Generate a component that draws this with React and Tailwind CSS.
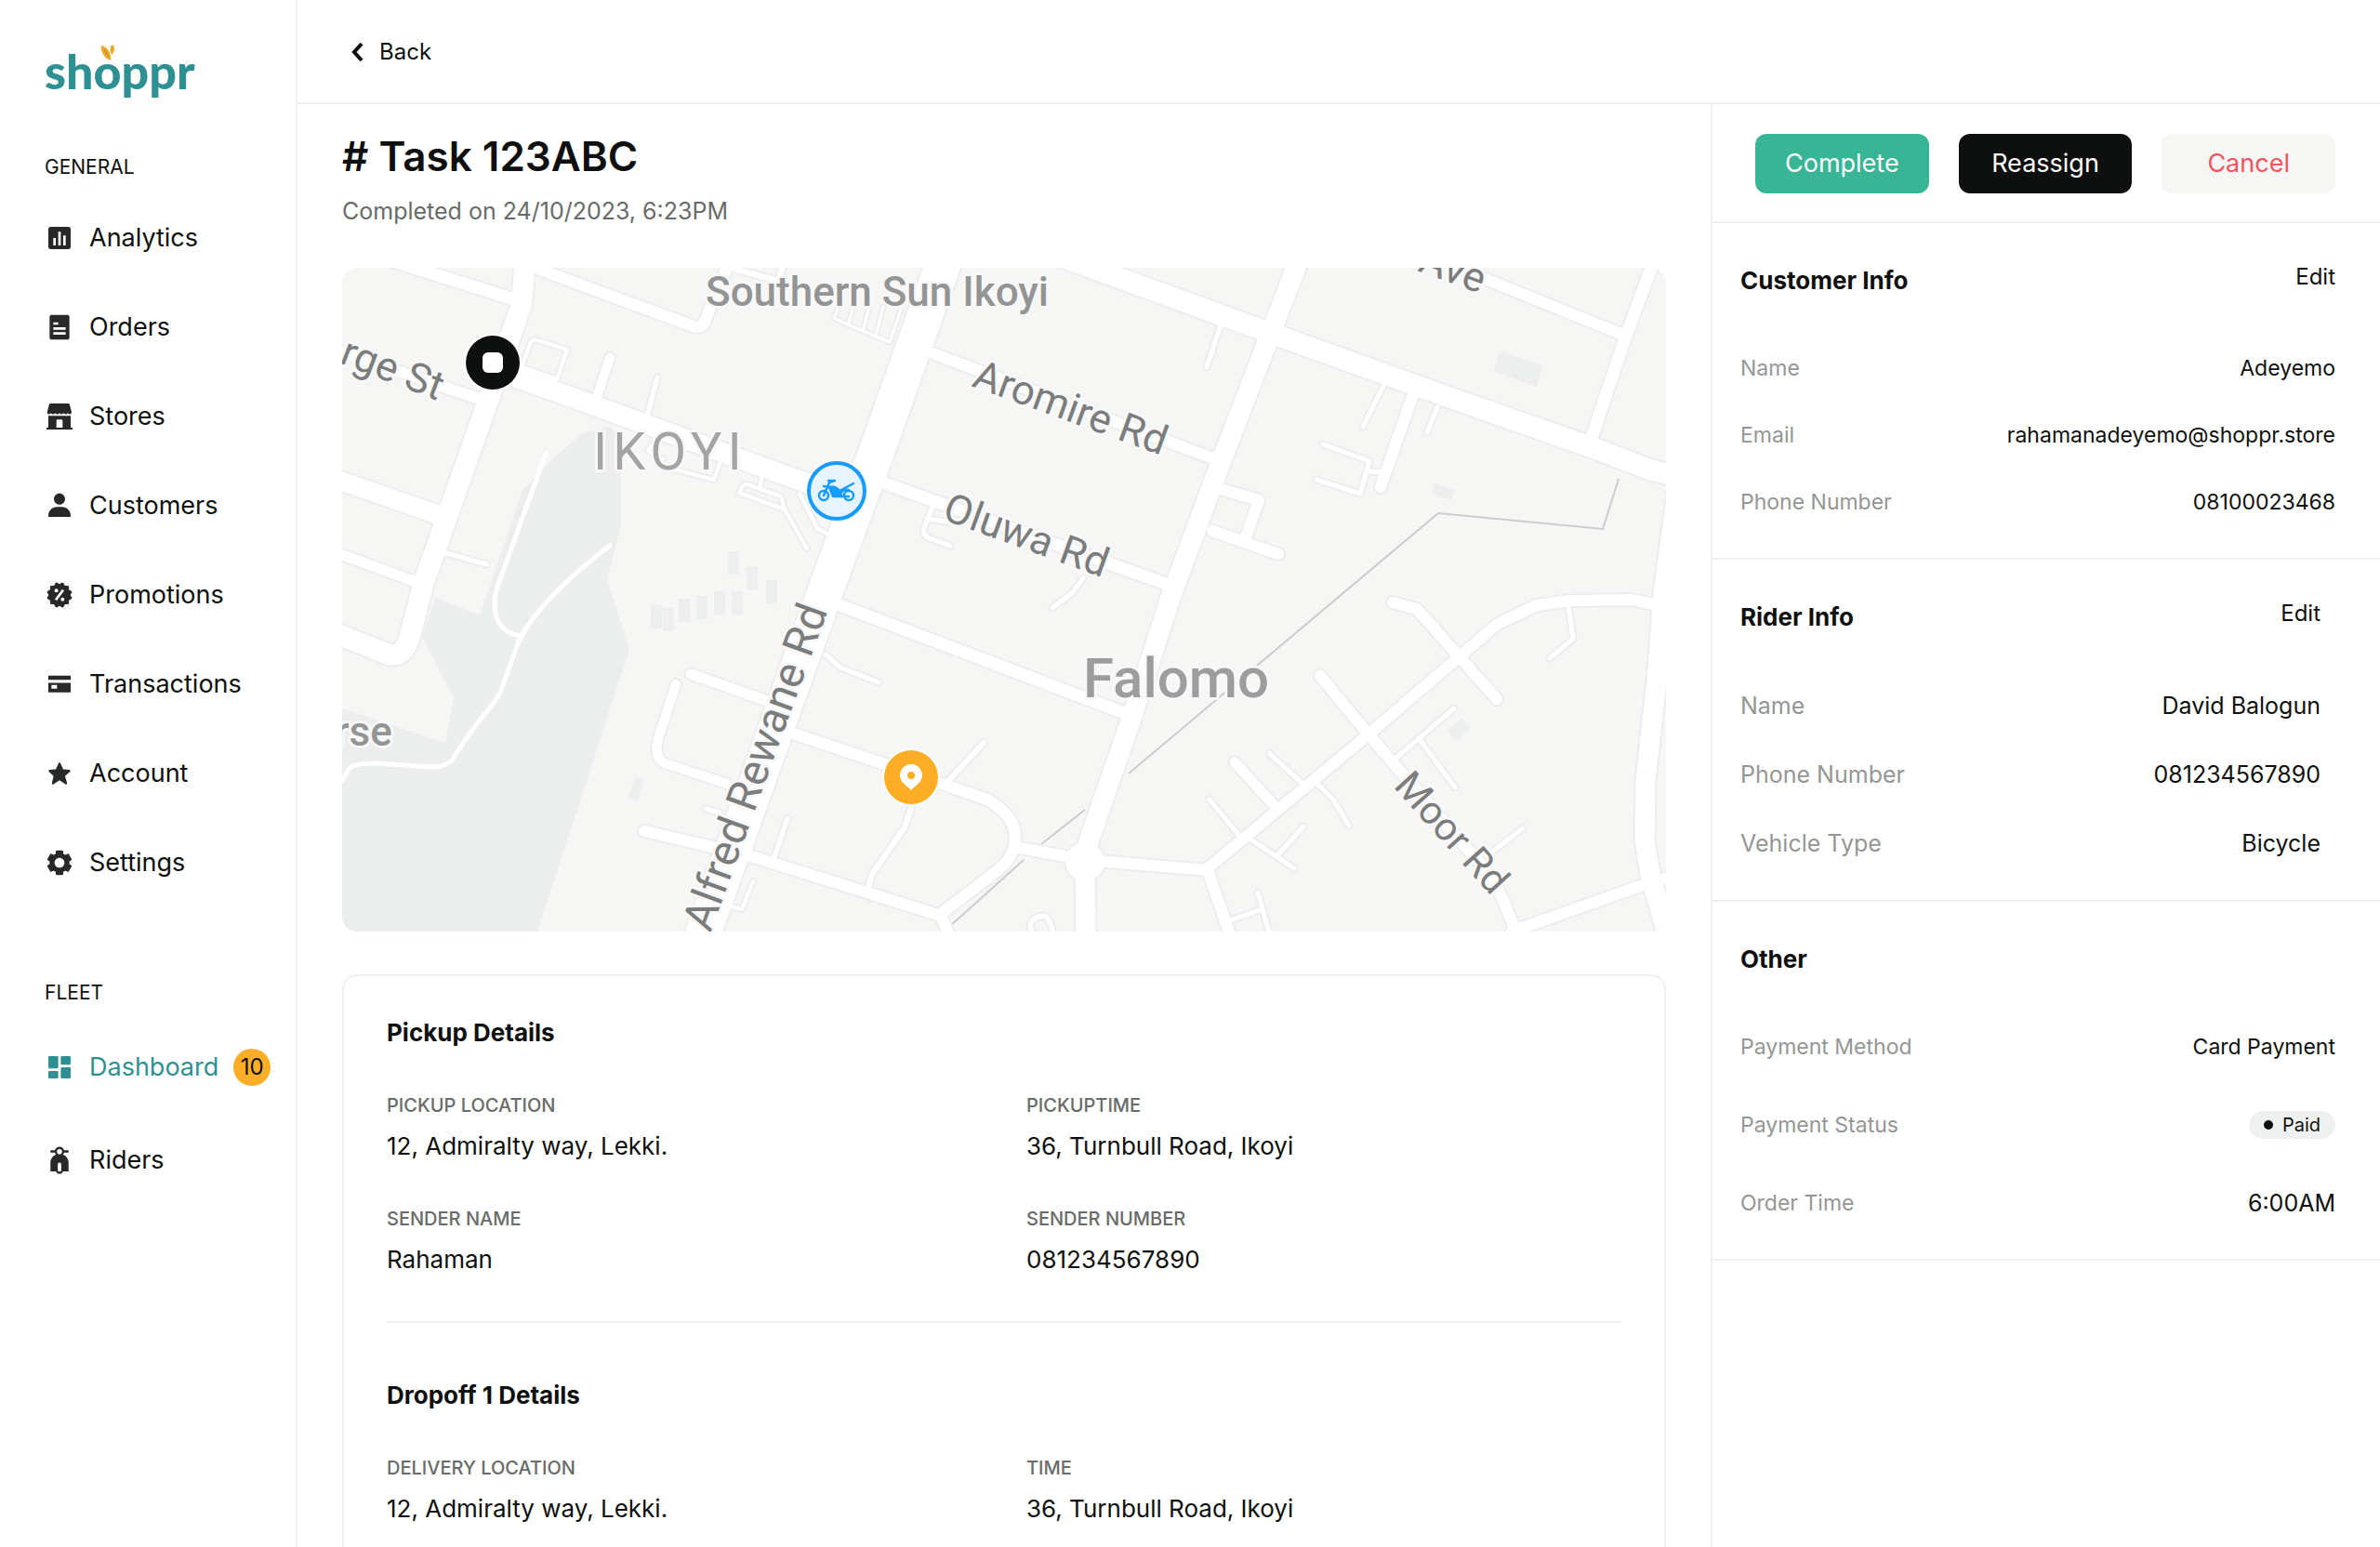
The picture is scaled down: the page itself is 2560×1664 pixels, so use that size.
import {
  BiSolidBarChartSquare,
  BiSolidCog,
  BiSolidDashboard,
  BiSolidOffer,
  BiSolidStar,
  BiSolidUser,
} from "react-icons/bi";

function OrdersIcon({ className }) {
  return (
    <svg viewBox="0 0 24 24" className={className} fill="currentColor" fillRule="evenodd">
      <path d="M5.500 2h13A1.500 1.500 0 0 1 20 3.500v17a1.500 1.500 0 0 1-1.500 1.500h-13A1.500 1.500 0 0 1 4 20.500v-17A1.500 1.500 0 0 1 5.500 2ZM7 8v2h4V8H7Zm0 4v2h10v-2H7Zm0 4v2h10v-2H7Z" />
    </svg>
  );
}

function StoreIcon({ className }) {
  return (
    <svg viewBox="0 0 24 24" className={className} fill="currentColor">
      <path d="M5.200 1.500h13.600c.7 0 1.200.4 1.400 1l1.500 5.700c.2 1-.3 1.900-1.300 1.900-.8 0-1.300-.5-1.700-1-.4.600-1 1-1.700 1s-1.300-.4-1.700-1c-.4.600-1 1-1.700 1s-1.300-.4-1.700-1c-.4.600-1 1-1.700 1s-1.300-.4-1.700-1c-.4.600-1 1-1.700 1s-1.300-.4-1.700-1c-.4.500-.900 1-1.700 1-1 0-1.500-.9-1.300-1.900l1.500-5.700c.2-.6.700-1 1.400-1Z" />
      <path
        fillRule="evenodd"
        d="M3 11.400h18v9.600H22.500v1.500h-21V21H3v-9.600ZM9.500 15.500V21h5v-5.500a1 1 0 0 0-1-1h-3a1 1 0 0 0-1 1Z"
      />
    </svg>
  );
}

function CardIcon({ className }) {
  return (
    <svg viewBox="0 0 24 24" className={className} fill="currentColor" fillRule="evenodd">
      <path d="M3.500 5h17a.5.500 0 0 1 .5.500V8.500H3V5.500a.5.500 0 0 1 .5-.5ZM3 10.900h18v7.200a.5.500 0 0 1-.5.500h-17a.5.500 0 0 1-.5-.5v-7.200Zm2.500 1.600v3h4.500v-3H5.500Z" />
    </svg>
  );
}

function MopedIcon({ className }) {
  return (
    <svg viewBox="0 0 24 24" className={className} fill="currentColor">
      <path
        fillRule="evenodd"
        d="M12 1.200a3.800 3.800 0 0 1 3.600 2.700h3.700v1.900h-3.600a3.800 3.800 0 0 1-.9 1.700c2.600 1 4.500 3.500 4.500 6.500v7h-4.600a2.800 2.800 0 0 1-5.400 0H4.700v-7c0-3 1.900-5.500 4.500-6.500a3.800 3.800 0 0 1-.9-1.700H4.700V3.900h3.700A3.800 3.800 0 0 1 12 1.200Zm0 1.800a2 2 0 1 0 0 4.200 2 2 0 0 0 0-4.200Zm0 10.800c-.8 0-1.400.6-1.400 1.400v4.600a1.400 1.400 0 0 0 2.800 0v-4.600c0-.8-.6-1.400-1.400-1.400Z"
      />
    </svg>
  );
}

function StarIcon({ className }) {
  return <BiSolidStar className={`${className} p-0.5`} />;
}

const generalLinks = [
  { label: "Analytics", Icon: BiSolidBarChartSquare },
  { label: "Orders", Icon: OrdersIcon },
  { label: "Stores", Icon: StoreIcon },
  { label: "Customers", Icon: BiSolidUser },
  { label: "Promotions", Icon: BiSolidOffer },
  { label: "Transactions", Icon: CardIcon },
  { label: "Account", Icon: StarIcon },
  { label: "Settings", Icon: BiSolidCog },
];

// casing and fill share the same path, so roads are listed once as [d, width]
const roads = [
  ["M52 -8 L185 34", 13],
  ["M210 1 L378 63 Q386 66 390 58 L405 22 L417 -8", 12],
  ["M417 0 L469 14 L475 -4", 6],
  ["M-8 88 L150 142", 12],
  ["M-8 227 L107 267", 20],
  ["M-8 306 L77 337", 11],
  ["M109 306 L155 319", 5],
  ["M288 97 L274 139", 10],
  ["M339 118 L328 160", 5],
  ["M194 104 L203 80 Q205 76 210 78 L242 88 L231 120 L194 107", 4],
  ["M329 197 L333 190 M329 197 L345 206 M350 215 L400 228 L406 211", 4],
  ["M472 246 L436 233 Q433 232 431 235 L427 242 L476 260 L500 302 M476 260 L472 246 M452 222 L449 238", 4],
  ["M492 243 L511 280 L521 286", 4],
  ["M529 54 L534 43 M529 54 L546 62 L589 80 L601 45 M549 45 L544 62 M567 42 L560 68 M582 42 L574 74", 3],
  ["M635 92 L939 206", 12],
  ["M584 232 L889 341", 13],
  ["M538 364 L839 478", 13],
  ["M375 437 L460 467", 11],
  ["M488 502 L584 534 L694 572 Q724 590 724 612 Q724 634 704 649 L644 695", 12],
  ["M325 606 L437 632 L644 697 L653 718", 12],
  ["M359 448 L341 503 Q333 529 350 534 L414 555", 10],
  ["M635 257 L626 280 Q624 288 632 291 L654 299 M630 270 L655 274", 5],
  ["M520 416 L536 430 L577 446", 5],
  ["M690 511 L653 551", 6],
  ["M612 581 L605 602 L570 652 L566 667", 6],
  ["M479 592 L465 634", 5],
  ["M442 660 L430 690 L418 687", 4],
  ["M391 582 L406 586", 5],
  ["M1190 -4 L1380 73", 12],
  ["M1218 10 L1222 -6", 5],
  ["M1411 -8 L1380 76 L1344 183", 13],
  ["M945 62 L930 107", 5],
  ["M1120 127 L1098 171", 5],
  ["M1151 139 L1117 236", 12],
  ["M1178 150 L1167 177", 5],
  ["M1055 190 L1105 208 L1095 243 L1048 228 M1103 219 L1118 220", 5],
  ["M948 239 L986 250 L972 290", 12],
  ["M936 283 L1007 308", 12],
  ["M797 334 L785 350 L764 366", 5],
  ["M931 646 L1104 502 L1243 383 L1285 363 L1321 358 L1387 357 L1411 362", 12],
  ["M1130 360 L1156 367 L1242 464", 12],
  ["M1052 439 L1104 502 L1137 540 L1236 655 Q1250 680 1262 714", 12],
  ["M1258 714 L1399 664 L1430 655", 12],
  ["M724 623 L799 637 L931 648 L955 718", 12],
  ["M960 532 L1005 581", 11],
  ["M998 523 L1033 555", 5],
  ["M1049 555 L1066 572 L1083 600", 5],
  ["M933 572 L967 613 M979 616 L1024 646 M1034 601 L1007 631", 5],
  ["M1196 474 L1134 527 M1158 506 L1197 559", 5],
  ["M1319 364 L1324 399 L1299 420", 5],
  ["M1270 603 L1236 629", 5],
  ["M985 672 L998 718 M955 702 L990 690", 5],
  ["M744 722 L740 708 Q742 698 754 697 Q762 698 765 718", 5],
  ["M197 -8 L193 39 L156 146 L87 341 L74 392 Q68 420 50 416 L-8 393", 22],
  ["M170 112 L249 140 L451 214 L543 247", 21],
  ["M740 -24 L995 69 L1184 137 L1349 195 L1406 217 L1434 224", 22],
  ["M1029 -8 L943 215 L891 355 L849 485 L802 620 L799 639 L800 722", 21],
  ["M1437 234 L1421 350 L1415 434 L1402 551 L1401 616 L1408 658 L1427 722", 21],
  ["M648 -8 L582 178 L519 350 L386 722", 38],
];

const parkPaths = [
  "M288 299 Q240 335 212 369 Q198 385 189 404 L172 452 Q166 466 150 484 Q130 510 118 530 Q108 538 95 537 L38 533 Q14 533 8 538 L0 552",
  "M219 200 L166 346 Q160 372 172 386 Q178 394 192 396",
];

const footprints = [
  [415, 305],
  [435, 321],
  [456, 336],
  [419, 348],
  [400, 348],
  [381, 353],
  [362, 356],
  [345, 366],
  [332, 363],
];

function TaskMap() {
  return (
    <svg
      viewBox="0 0 1424 714"
      role="img"
      aria-label="Delivery route map"
      className="mt-[46px] block w-full rounded-2xl bg-[#f6f6f5] font-['Roboto',sans-serif]"
    >
      <path
        fill="#ebeeed"
        d="M258 178 L288 171 L300 188 L300 276 L285 336 L309 411 L210 714 L0 714 L0 474 L111 511 L120 462 L86 397 L100 355 L148 374 L194 239 L226 206 Z"
      />
      <g fill="#edefee">
        {footprints.map(([x, y]) => (
          <rect key={`${x}-${y}`} x={x} y={y} width="12" height="25" rx="1" />
        ))}
        <path d="M319 548 L325 550 L318 574 L308 570 L315 548 Z" />
        <path d="M1245 90 L1291 105 L1285 128 L1239 112 Z" />
        <path d="M1175 232 L1197 239 L1193 250 L1172 243 Z" />
        <path d="M1205 485 L1213 495 L1198 509 L1189 498 Z" />
      </g>
      <path
        d="M653 709 L733 637 M752 620 L799 583 M846 544 L1179 264 L1356 281 L1373 227"
        fill="none"
        stroke="#cbcdcd"
        strokeWidth="2"
      />

      <g fill="none" strokeLinecap="round" strokeLinejoin="round">
        {roads.map(([d, width]) => (
          <path key={d} d={d} stroke="#ebeeed" strokeWidth={width + 4} />
        ))}
        <circle cx="799" cy="639" r="23" fill="#ebeeed" />
        {roads.map(([d, width]) => (
          <path key={d} d={d} stroke="#ffffff" strokeWidth={width} />
        ))}
        <circle cx="799" cy="639" r="21" fill="#ffffff" />
        {parkPaths.map((d) => (
          <path key={d} d={d} stroke="#ffffff" strokeWidth="5" />
        ))}
      </g>

      <g stroke="#f8f8f8" strokeWidth="6" strokeLinejoin="round" paintOrder="stroke">
        <g fill="#939595" fontSize="44" fontWeight="500">
          <text x="391" y="41">Southern Sun Ikoyi</text>
          <text x="-8" y="514">rse</text>
        </g>
        <text x="270" y="217" fill="#a3a5a5" fontSize="56" letterSpacing="6">
          IKOYI
        </text>
        <text x="797" y="462" fill="#9c9d9d" fontSize="60" fontWeight="500">
          Falomo
        </text>
        <g fill="#7b7d7d" fontSize="44">
          <text transform="translate(-4 102) rotate(21)">rge St</text>
          <text transform="translate(676 127) rotate(20)">Aromire Rd</text>
          <text transform="translate(644 270) rotate(20)">Oluwa Rd</text>
          <text transform="translate(1156 3) rotate(20)">Ave</text>
          <text transform="translate(1130 558) rotate(48)" fontSize="42">Moor Rd</text>
          <text transform="translate(396 716) rotate(-70)" fontSize="47">Alfred Rewane Rd</text>
        </g>
      </g>

      <g transform="translate(162 102)">
        <circle r="31" fill="#ffffff" />
        <circle r="29" fill="#0e100f" />
        <rect x="-11" y="-11" width="22" height="22" rx="6" fill="#ffffff" />
      </g>
      <g transform="translate(532 240)">
        <circle r="30" fill="#e6f4ff" stroke="#189bff" strokeWidth="4" />
        <g fill="none" stroke="#189bff" strokeWidth="2.500" strokeLinecap="round" strokeLinejoin="round">
          <circle cx="-14" cy="5" r="5" />
          <circle cx="13" cy="5" r="5" />
          <path d="M-14 5 L-8 -9 L-2 -11 M-9 -11 H-2 M-14 -5 L-8 -4 M3 0 L18 -8 M4 2 Q8 -2 13 -1 M5 6 H13" />
          <path d="M-8 -4 Q-2 -6 3 0 Q5 3 5 6 H-4 Z" fill="#189bff" />
        </g>
      </g>
      <g transform="translate(612 548)">
        <circle r="31" fill="#ffffff" />
        <circle r="29" fill="#fdae26" />
        <path
          d="M0 14 C-3 10 -12 6 -12 -2 A12 12 0 0 1 12 -2 C12 6 3 10 0 14 Z"
          fill="#ffffff"
        />
        <circle cy="-2" r="4" fill="#fdae26" />
      </g>
    </svg>
  );
}

function Logo() {
  return (
    <a href="#home" className="relative block h-16 w-fit font-['Lato',sans-serif] text-[52px] leading-16 font-black text-[#2f9094]">
      shoppr
      <svg viewBox="0 0 16 18" className="absolute top-1 left-[60px] h-[18px] w-4" fill="#f5a623">
        <path d="M1 1 C6 2 12 7 11 17 C5 15 0 9 1 1 Z" />
        <path d="M13 0 C16 3 16 7 12 11 C10 6 10 2 13 0 Z" />
        <path d="M4 5 L9 13" stroke="#7a9a5a" strokeWidth="1" />
      </svg>
    </a>
  );
}

function Sidebar() {
  return (
    <aside className="w-80 shrink-0 border-r-2 border-[#f0f0f0] px-12 pt-11">
      <Logo />
      <p className="mt-15 text-[21px] leading-6">GENERAL</p>
      <nav className="mt-12 flex flex-col gap-16">
        {generalLinks.map(({ label, Icon }) => (
          <a key={label} href={`#${label.toLowerCase()}`} className="flex items-center gap-4 text-[27px] leading-8">
            <Icon className="size-8 shrink-0 text-[#272928]" />
            {label}
          </a>
        ))}
      </nav>

      <p className="mt-28 text-[21px] leading-6">FLEET</p>
      <nav className="mt-12 flex flex-col gap-15">
        <a href="#dashboard" className="flex h-10 items-center gap-4 text-[27px] leading-8 text-[#2f9094]">
          <BiSolidDashboard className="size-8 shrink-0" />
          Dashboard
          <span className="flex size-10 shrink-0 items-center justify-center rounded-full bg-[#fdae26] text-2xl text-[#0e100f]">
            10
          </span>
        </a>
        <a href="#riders" className="flex h-10 items-center gap-4 text-[27px] leading-8">
          <MopedIcon className="size-8 shrink-0 text-[#272928]" />
          Riders
        </a>
      </nav>
    </aside>
  );
}

function Field({ label, value }) {
  return (
    <div>
      <dt className="text-xl leading-6 font-medium text-[#686b6a]">{label}</dt>
      <dd className="mt-4 text-[26px] leading-8">{value}</dd>
    </div>
  );
}

function StopDetails({ title, fields }) {
  return (
    <section>
      <h2 className="text-[26px] leading-9 font-bold">{title}</h2>
      <dl className="mt-12 grid grid-cols-2 gap-x-12 gap-y-[50px]">
        {fields.map(([label, value]) => (
          <Field key={label} label={label} value={value} />
        ))}
      </dl>
    </section>
  );
}

function InfoSection({ title, editable, className, headClassName = "", children }) {
  return (
    <section className="border-b-2 border-[#f0f0f0] py-11 pl-[30px]">
      <div className={`flex items-start justify-between ${headClassName}`}>
        <h2 className="text-[26px] leading-9 font-bold">{title}</h2>
        {editable && (
          <button type="button" className="cursor-pointer text-2xl leading-7">
            Edit
          </button>
        )}
      </div>
      <dl className={`mt-15 flex flex-col ${className}`}>{children}</dl>
    </section>
  );
}

function InfoRow({ label, valueClassName = "", children }) {
  return (
    <div className="flex items-center justify-between">
      <dt className="text-[#949695]">{label}</dt>
      <dd className={valueClassName}>{children}</dd>
    </div>
  );
}

function InfoPanel() {
  return (
    <aside className="w-[720px] shrink-0 border-l-2 border-[#f0f0f0]">
      <div className="grid grid-cols-3 gap-8 border-b-2 border-[#f0f0f0] pt-8 pr-12 pb-[30px] pl-[46px] text-[27px]">
        <button type="button" className="h-16 cursor-pointer rounded-xl bg-[#37b594] text-white">
          Complete
        </button>
        <button type="button" className="h-16 cursor-pointer rounded-xl bg-[#0e100f] text-white">
          Reassign
        </button>
        <button type="button" className="h-16 cursor-pointer rounded-xl bg-[#f6f6f5] text-[#f0555f]">
          Cancel
        </button>
      </div>

      <InfoSection title="Customer Info" editable headClassName="pr-12" className="gap-10 pr-12 text-[23px] leading-8">
        <InfoRow label="Name">Adeyemo</InfoRow>
        <InfoRow label="Email">rahamanadeyemo@shoppr.store</InfoRow>
        <InfoRow label="Phone Number">08100023468</InfoRow>
      </InfoSection>

      <InfoSection title="Rider Info" editable headClassName="pr-16" className="gap-10 pr-16 text-[25px] leading-[34px]">
        <InfoRow label="Name">David Balogun</InfoRow>
        <InfoRow label="Phone Number">081234567890</InfoRow>
        <InfoRow label="Vehicle Type">Bicycle</InfoRow>
      </InfoSection>

      <InfoSection title="Other" className="gap-13 pr-12 text-[23px] leading-8">
        <InfoRow label="Payment Method">Card Payment</InfoRow>
        <InfoRow label="Payment Status">
          <span className="flex h-[30px] items-center gap-2.5 rounded-full bg-[#eff1f0] px-4 text-xl">
            <span className="size-2.5 rounded-full bg-[#0e100f]" />
            Paid
          </span>
        </InfoRow>
        <InfoRow label="Order Time" valueClassName="text-[25px] leading-8">
          6:00AM
        </InfoRow>
      </InfoSection>
    </aside>
  );
}

export default function App() {
  return (
    <div className="flex h-screen overflow-hidden bg-white font-['Inter',sans-serif] text-[#0e100f]">
      <Sidebar />

      <div className="flex min-w-0 flex-1 flex-col">
        <header className="flex h-28 shrink-0 items-center border-b-2 border-[#f0f0f0] px-14 pt-0.5">
          <button type="button" className="flex cursor-pointer items-center gap-4 text-2xl leading-8">
            <svg viewBox="0 0 16 24" className="h-6 w-4" fill="none" stroke="currentColor" strokeWidth="4">
              <path d="M13 3 L5 12 L13 21" />
            </svg>
            Back
          </button>
        </header>

        <div className="flex min-h-0 flex-1">
          <main className="min-w-0 flex-1 overflow-y-auto px-12 pt-7 [scrollbar-width:none]">
            <h1 className="text-[44px] leading-14 font-semibold"># Task 123ABC</h1>
            <p className="mt-4 text-[25px] leading-[30px] text-[#686b6a]">Completed on 24/10/2023, 6:23PM</p>

            <TaskMap />

            <div className="mt-[46px] rounded-2xl border-2 border-[#f0f0f0] px-[46px] pt-[43px] pb-[50px]">
              <StopDetails
                title="Pickup Details"
                fields={[
                  ["PICKUP LOCATION", "12, Admiralty way, Lekki."],
                  ["PICKUPTIME", "36, Turnbull Road, Ikoyi"],
                  ["SENDER NAME", "Rahaman"],
                  ["SENDER NUMBER", "081234567890"],
                ]}
              />
              <hr className="mt-[50px] mb-15 border-t-2 border-[#f0f0f0]" />
              <StopDetails
                title="Dropoff 1 Details"
                fields={[
                  ["DELIVERY LOCATION", "12, Admiralty way, Lekki."],
                  ["TIME", "36, Turnbull Road, Ikoyi"],
                ]}
              />
            </div>
          </main>

          <InfoPanel />
        </div>
      </div>
    </div>
  );
}
